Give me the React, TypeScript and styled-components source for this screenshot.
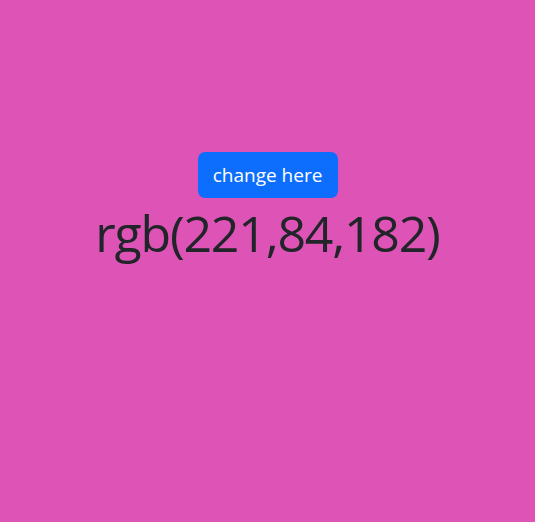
import React, { useState } from "react";
import styled, { createGlobalStyle } from "styled-components";

const Global = createGlobalStyle`
  html, body { margin: 0; padding: 0; }
  body { font-family: "Open Sans", "Noto Sans", sans-serif; }
`;

const Page = styled.div<{ $bg: string }>`
  width: 535px;
  height: 522px;
  background: ${(p) => p.$bg};
  display: flex;
  flex-direction: column;
  align-items: center;
  padding-top: 152px;
  box-sizing: border-box;
`;

const Button = styled.button`
  background: #0d6efd;
  color: #fff;
  border: none;
  border-radius: 7px;
  width: 140px;
  height: 46px;
  padding: 0;
  font-family: "Open Sans", "Noto Sans", sans-serif;
  font-size: 19px;
  cursor: pointer;
`;

const Heading = styled.h1`
  margin: 5px 0 0;
  color: #212529;
  font-family: "Open Sans", "Noto Sans", sans-serif;
  font-weight: 500;
  font-size: 50px;
  letter-spacing: -1.2px;
  line-height: 1.2;
`;

export default function App() {
  const [rgb, setRgb] = useState<[number, number, number]>([221, 84, 182]);
  const color = `rgb(${rgb[0]},${rgb[1]},${rgb[2]})`;
  return (
    <>
      <Global />
      <Page $bg={color}>
        <Button
          onClick={() =>
            setRgb([
              Math.floor(Math.random() * 256),
              Math.floor(Math.random() * 256),
              Math.floor(Math.random() * 256),
            ])
          }
        >
          change here
        </Button>
        <Heading>{color}</Heading>
      </Page>
    </>
  );
}
